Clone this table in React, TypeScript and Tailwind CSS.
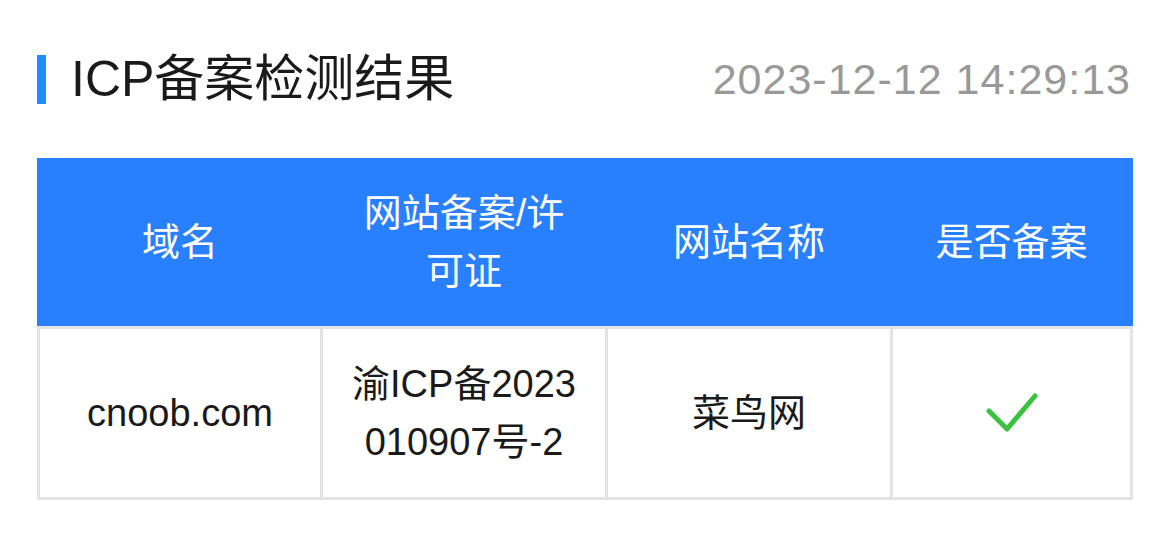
const font = "font-['Liberation_Sans','Noto_Sans_CJK_SC',sans-serif]";

type Row = {
  domain: string;
  license: string;
  name: string;
  filed: boolean;
};

const columns = ["域名", "网站备案/许可证", "网站名称", "是否备案"];

const rows: Row[] = [
  { domain: "cnoob.com", license: "渝ICP备2023010907号-2", name: "菜鸟网", filed: true },
];

const grid = "grid grid-cols-[280px_282px_282px_237px] gap-x-[3px]";

const Check = () => (
  <svg width="52" height="40" viewBox="0 0 52 40" fill="none">
    <path
      d="M3 18 L21 36 L49 3"
      stroke="#38c23d"
      strokeWidth="5"
      strokeLinecap="round"
      strokeLinejoin="round"
    />
  </svg>
);

export default function App() {
  return (
    <div className={`${font} w-[1170px] h-[534px] bg-white px-[37px] pt-[54px]`}>
      <div className="flex items-center justify-between">
        <div className="flex items-center">
          <div className="w-[9px] h-[49px] bg-[#1f8bff]" />
          <h1 className="ml-[25px] text-[50px] leading-none text-[#1a1a1a]">ICP备案检测结果</h1>
        </div>
        <div className="mr-[2px] text-[43px] leading-none tracking-[1px] text-[#999999]">2023-12-12 14:29:13</div>
      </div>

      <div className="mt-[54px] w-[1096px]">
        <div className={`${grid} bg-[#2980fe] px-[3px]`}>
          {columns.map((c) => (
            <div
              key={c}
              className="flex items-center justify-center px-[25px] py-[26px] text-center text-[38px] leading-[58px] text-white break-all"
            >
              {c}
            </div>
          ))}
        </div>
        {rows.map((r) => (
          <div key={r.domain} className={`${grid} gap-y-[3px] bg-[#e3e3e3] p-[3px]`}>
            <div className="flex items-center justify-center bg-white px-[25px] py-[26px] text-center text-[38px] leading-[58px] text-[#1a1a1a]">
              {r.domain}
            </div>
            <div className="flex items-center justify-center bg-white px-[25px] py-[26px] text-center text-[38px] leading-[58px] text-[#1a1a1a] break-all">
              {r.license}
            </div>
            <div className="flex items-center justify-center bg-white px-[25px] py-[26px] text-center text-[38px] leading-[58px] text-[#1a1a1a]">
              {r.name}
            </div>
            <div className="flex items-center justify-center bg-white py-[26px]">
              {r.filed && <Check />}
            </div>
          </div>
        ))}
      </div>
    </div>
  );
}
